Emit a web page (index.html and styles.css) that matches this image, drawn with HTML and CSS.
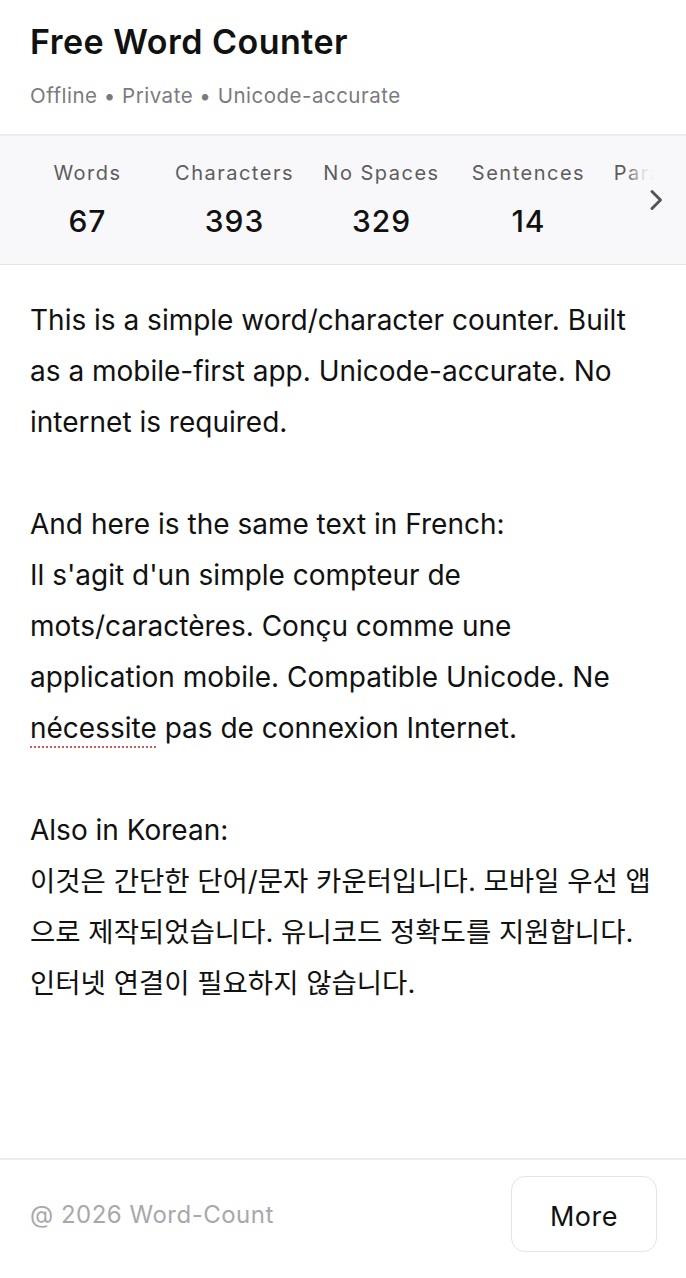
FILE: index.html
```html
<!DOCTYPE html>
<html lang="en">
<head>
  <meta charset="UTF-8">
  <title>Free Word Counter</title>
  <link rel="stylesheet" href="styles.css">
</head>
<body>
  <div class="app">
    <header class="header">
      <h1 class="title">Free Word Counter</h1>
      <p class="subtitle">Offline • Private • Unicode-accurate</p>
    </header>

    <!-- Stats strip -->
    <section class="stats">
      <div class="stats-track">
        <div class="stat"><div class="stat-label">Words</div><div class="stat-value">67</div></div>
        <div class="stat"><div class="stat-label">Characters</div><div class="stat-value">393</div></div>
        <div class="stat"><div class="stat-label">No Spaces</div><div class="stat-value">329</div></div>
        <div class="stat"><div class="stat-label">Sentences</div><div class="stat-value">14</div></div>
        <div class="stat"><div class="stat-label">Paragraphs</div><div class="stat-value">3</div></div>
      </div>
      <div class="stats-fade">
        <svg class="chevron" width="16" height="24" viewBox="0 0 16 24">
          <path d="M4 3.5 L12.5 12 L4 20.5" fill="none" stroke="#555" stroke-width="3" stroke-linecap="round" stroke-linejoin="round"/>
        </svg>
      </div>
    </section>

    <main class="editor">
      <div class="editor-text">This is a simple word/character counter. Built as a mobile-first app. Unicode-accurate. No internet is required.

And here is the same text in French:
Il s'agit d'un simple compteur de mots/caractères. Conçu comme une application mobile. Compatible Unicode. Ne <span class="misspelled">nécessite</span> pas de connexion Internet.

Also in Korean:
<span lang="ko" class="ko">이것은 간단한 단어/문자 카운터입니다. 모바일 우선 앱으로 제작되었습니다. 유니코드 정확도를 지원합니다. 인터넷 연결이 필요하지 않습니다.</span></div>
    </main>

    <footer class="footer">
      <span class="copyright">@ 2026 Word-Count</span>
      <button class="more-btn">More</button>
    </footer>
  </div>
</body>
</html>
```

FILE: styles.css
```css
body {
  margin: 0;
  background: #fff;
  font-family: Inter, "Noto Sans CJK KR", sans-serif;
  color: #111;
}

.app {
  display: flex;
  flex-direction: column;
  min-height: 100vh;
}

.header {
  padding: 20px 30px 24px;
  border-bottom: 2px solid #ececee;
}

.title {
  margin: 0;
  font-size: 34px;
  line-height: 44px;
  font-weight: 600;
  letter-spacing: 0.5px;
}

.subtitle {
  margin: 18px 0 0;
  font-size: 20.5px;
  line-height: 28px;
  color: #7a7a7e;
  letter-spacing: 0.5px;
}

/* === Stats === */
.stats {
  position: relative;
  background: #f8f8fa;
  border-bottom: 1px solid #e4e4e7;
  overflow: hidden;
}

.stats-track {
  display: flex;
  padding: 25px 0 23px 14px;
}

.stat {
  flex: 0 0 147px;
  text-align: center;
}

.stat-label {
  font-size: 20px;
  line-height: 24px;
  color: #5c5c60;
  letter-spacing: 1.5px;
  white-space: nowrap;
}

.stat-value {
  margin-top: 16px;
  font-size: 30px;
  line-height: 40px;
  font-weight: 500;
  letter-spacing: 1px;
  color: #111;
}

.stats-fade {
  position: absolute;
  top: 0;
  right: 0;
  bottom: 0;
  width: 70px;
  display: flex;
  align-items: center;
  justify-content: flex-end;
  padding-right: 22px;
  box-sizing: border-box;
  background: linear-gradient(to right, rgba(248, 248, 250, 0) 10px, rgba(248, 248, 250, 0.85) 28px, #f8f8fa 40px);
}

.chevron {
  margin-top: 0;
}

/* === Editor === */
.editor {
  flex: 1;
  padding: 30px 30px;
}

.editor-text {
  white-space: pre-wrap;
  font-size: 28px;
  line-height: 51px;
  color: #111;
}

.ko {
  font-size: 27.5px;
}

.misspelled {
  text-decoration: underline dotted #e05555;
  text-decoration-thickness: 2px;
  text-underline-offset: 8px;
}

/* === Footer === */
.footer {
  display: flex;
  align-items: center;
  justify-content: space-between;
  padding: 16px 29px 26px 30px;
  border-top: 2px solid #ececee;
}

.copyright {
  font-size: 24px;
  letter-spacing: 0.5px;
  color: #a8a8ac;
}

.more-btn {
  width: 146px;
  height: 76px;
  background: #fff;
  border: 1.5px solid #e4e4e7;
  border-radius: 14px;
  font-family: Inter, sans-serif;
  font-size: 27px;
  letter-spacing: 0.5px;
  color: #111;
  padding: 0;
  padding-top: 4px;
}
```
